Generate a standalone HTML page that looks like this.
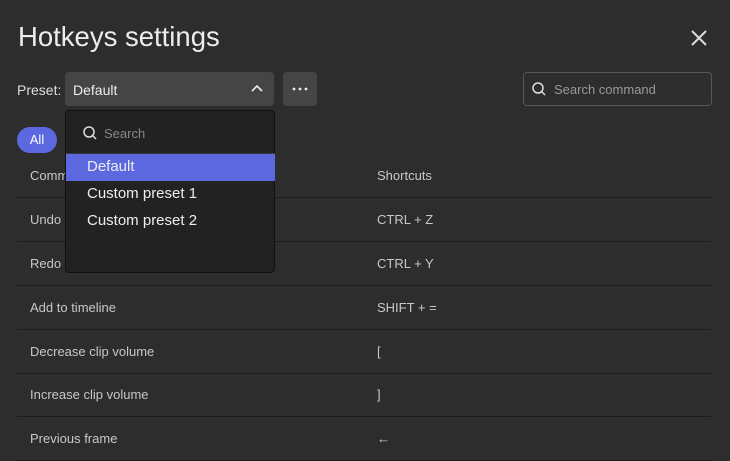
<!DOCTYPE html><html><head><style>
body{margin:0;width:730px;height:460px;background:#2d2d2d;font-family:"Liberation Sans",sans-serif;color:#c8c8c8;position:relative;overflow:hidden}
.a{position:absolute}
.t{left:18px;top:21px;font-size:27.5px;color:#ececec}
.row{position:absolute;left:17px;width:694px;height:44px;border-bottom:1px solid #1c1c1c;font-size:13px}
.row span{position:absolute;top:15px}
.c1{left:13px}.c2{left:360px}
.dd{left:65px;top:110px;width:208px;height:161px;background:#222;border:1px solid #111;border-radius:4px}
.it{position:absolute;left:0;width:209px;height:27px;font-size:15px;color:#eee}
.it span{position:absolute;left:21px;top:4px}
</style></head><body>
<div class="a t">Hotkeys settings</div>
<svg class="a" style="left:690px;top:29px" width="18" height="18"><path d="M2 2L16 16M16 2L2 16" stroke="#ddd" stroke-width="2"/></svg>
<div class="a" style="left:17px;top:82px;font-size:14px;color:#ddd">Preset:</div>
<div class="a" style="left:65px;top:72px;width:209px;height:34px;background:#454545;border-radius:4px"></div>
<div class="a" style="left:73px;top:82px;font-size:14px;color:#eee">Default</div>
<svg class="a" style="left:250px;top:83px" width="14" height="10"><path d="M2 8L7 3L12 8" stroke="#eee" stroke-width="1.6" fill="none"/></svg>
<div class="a" style="left:283px;top:72px;width:34px;height:34px;background:#454545;border-radius:4px"></div>
<svg class="a" style="left:292px;top:87px" width="16" height="4"><circle cx="2" cy="2" r="1.4" fill="#eee"/><circle cx="8" cy="2" r="1.4" fill="#eee"/><circle cx="14" cy="2" r="1.4" fill="#eee"/></svg>
<div class="a" style="left:523px;top:72px;width:187px;height:32px;border:1px solid #585858;border-radius:4px"></div>
<svg class="a" style="left:531px;top:81px" width="16" height="16"><circle cx="7" cy="7" r="5" stroke="#ddd" stroke-width="1.5" fill="none"/><path d="M10.5 10.5L14 14" stroke="#ddd" stroke-width="1.5"/></svg>
<div class="a" style="left:554px;top:82px;font-size:13px;color:#999">Search command</div>
<div class="a" style="left:17px;top:127px;width:40px;height:26px;background:#5b68e0;border-radius:13px;color:#fff;font-size:13px;text-align:center;line-height:26px">All</div>
<div class="row" style="top:153px"><span class="c1">Commands</span><span class="c2">Shortcuts</span></div>
<div class="row" style="top:197px"><span class="c1">Undo</span><span class="c2">CTRL + Z</span></div>
<div class="row" style="top:241px"><span class="c1">Redo</span><span class="c2">CTRL + Y</span></div>
<div class="row" style="top:285px"><span class="c1">Add to timeline</span><span class="c2">SHIFT + =</span></div>
<div class="row" style="top:329px"><span class="c1">Decrease clip volume</span><span class="c2">[</span></div>
<div class="row" style="top:372px"><span class="c1">Increase clip volume</span><span class="c2">]</span></div>
<div class="row" style="top:416px"><span class="c1">Previous frame</span><span class="c2">←</span></div>
<div class="a dd">
<svg class="a" style="left:16px;top:14px" width="16" height="16"><circle cx="7" cy="7" r="5" stroke="#ddd" stroke-width="1.5" fill="none"/><path d="M10.5 10.5L14 14" stroke="#ddd" stroke-width="1.5"/></svg>
<div class="a" style="left:38px;top:15px;font-size:13px;color:#888">Search</div>
<div class="a" style="left:0;top:42px;width:209px;height:1px;background:#3a3a3a"></div>
<div class="it" style="top:43px;background:#5b68e0"><span>Default</span></div>
<div class="it" style="top:70px"><span>Custom preset 1</span></div>
<div class="it" style="top:97px"><span>Custom preset 2</span></div>
</div>
</body></html>
